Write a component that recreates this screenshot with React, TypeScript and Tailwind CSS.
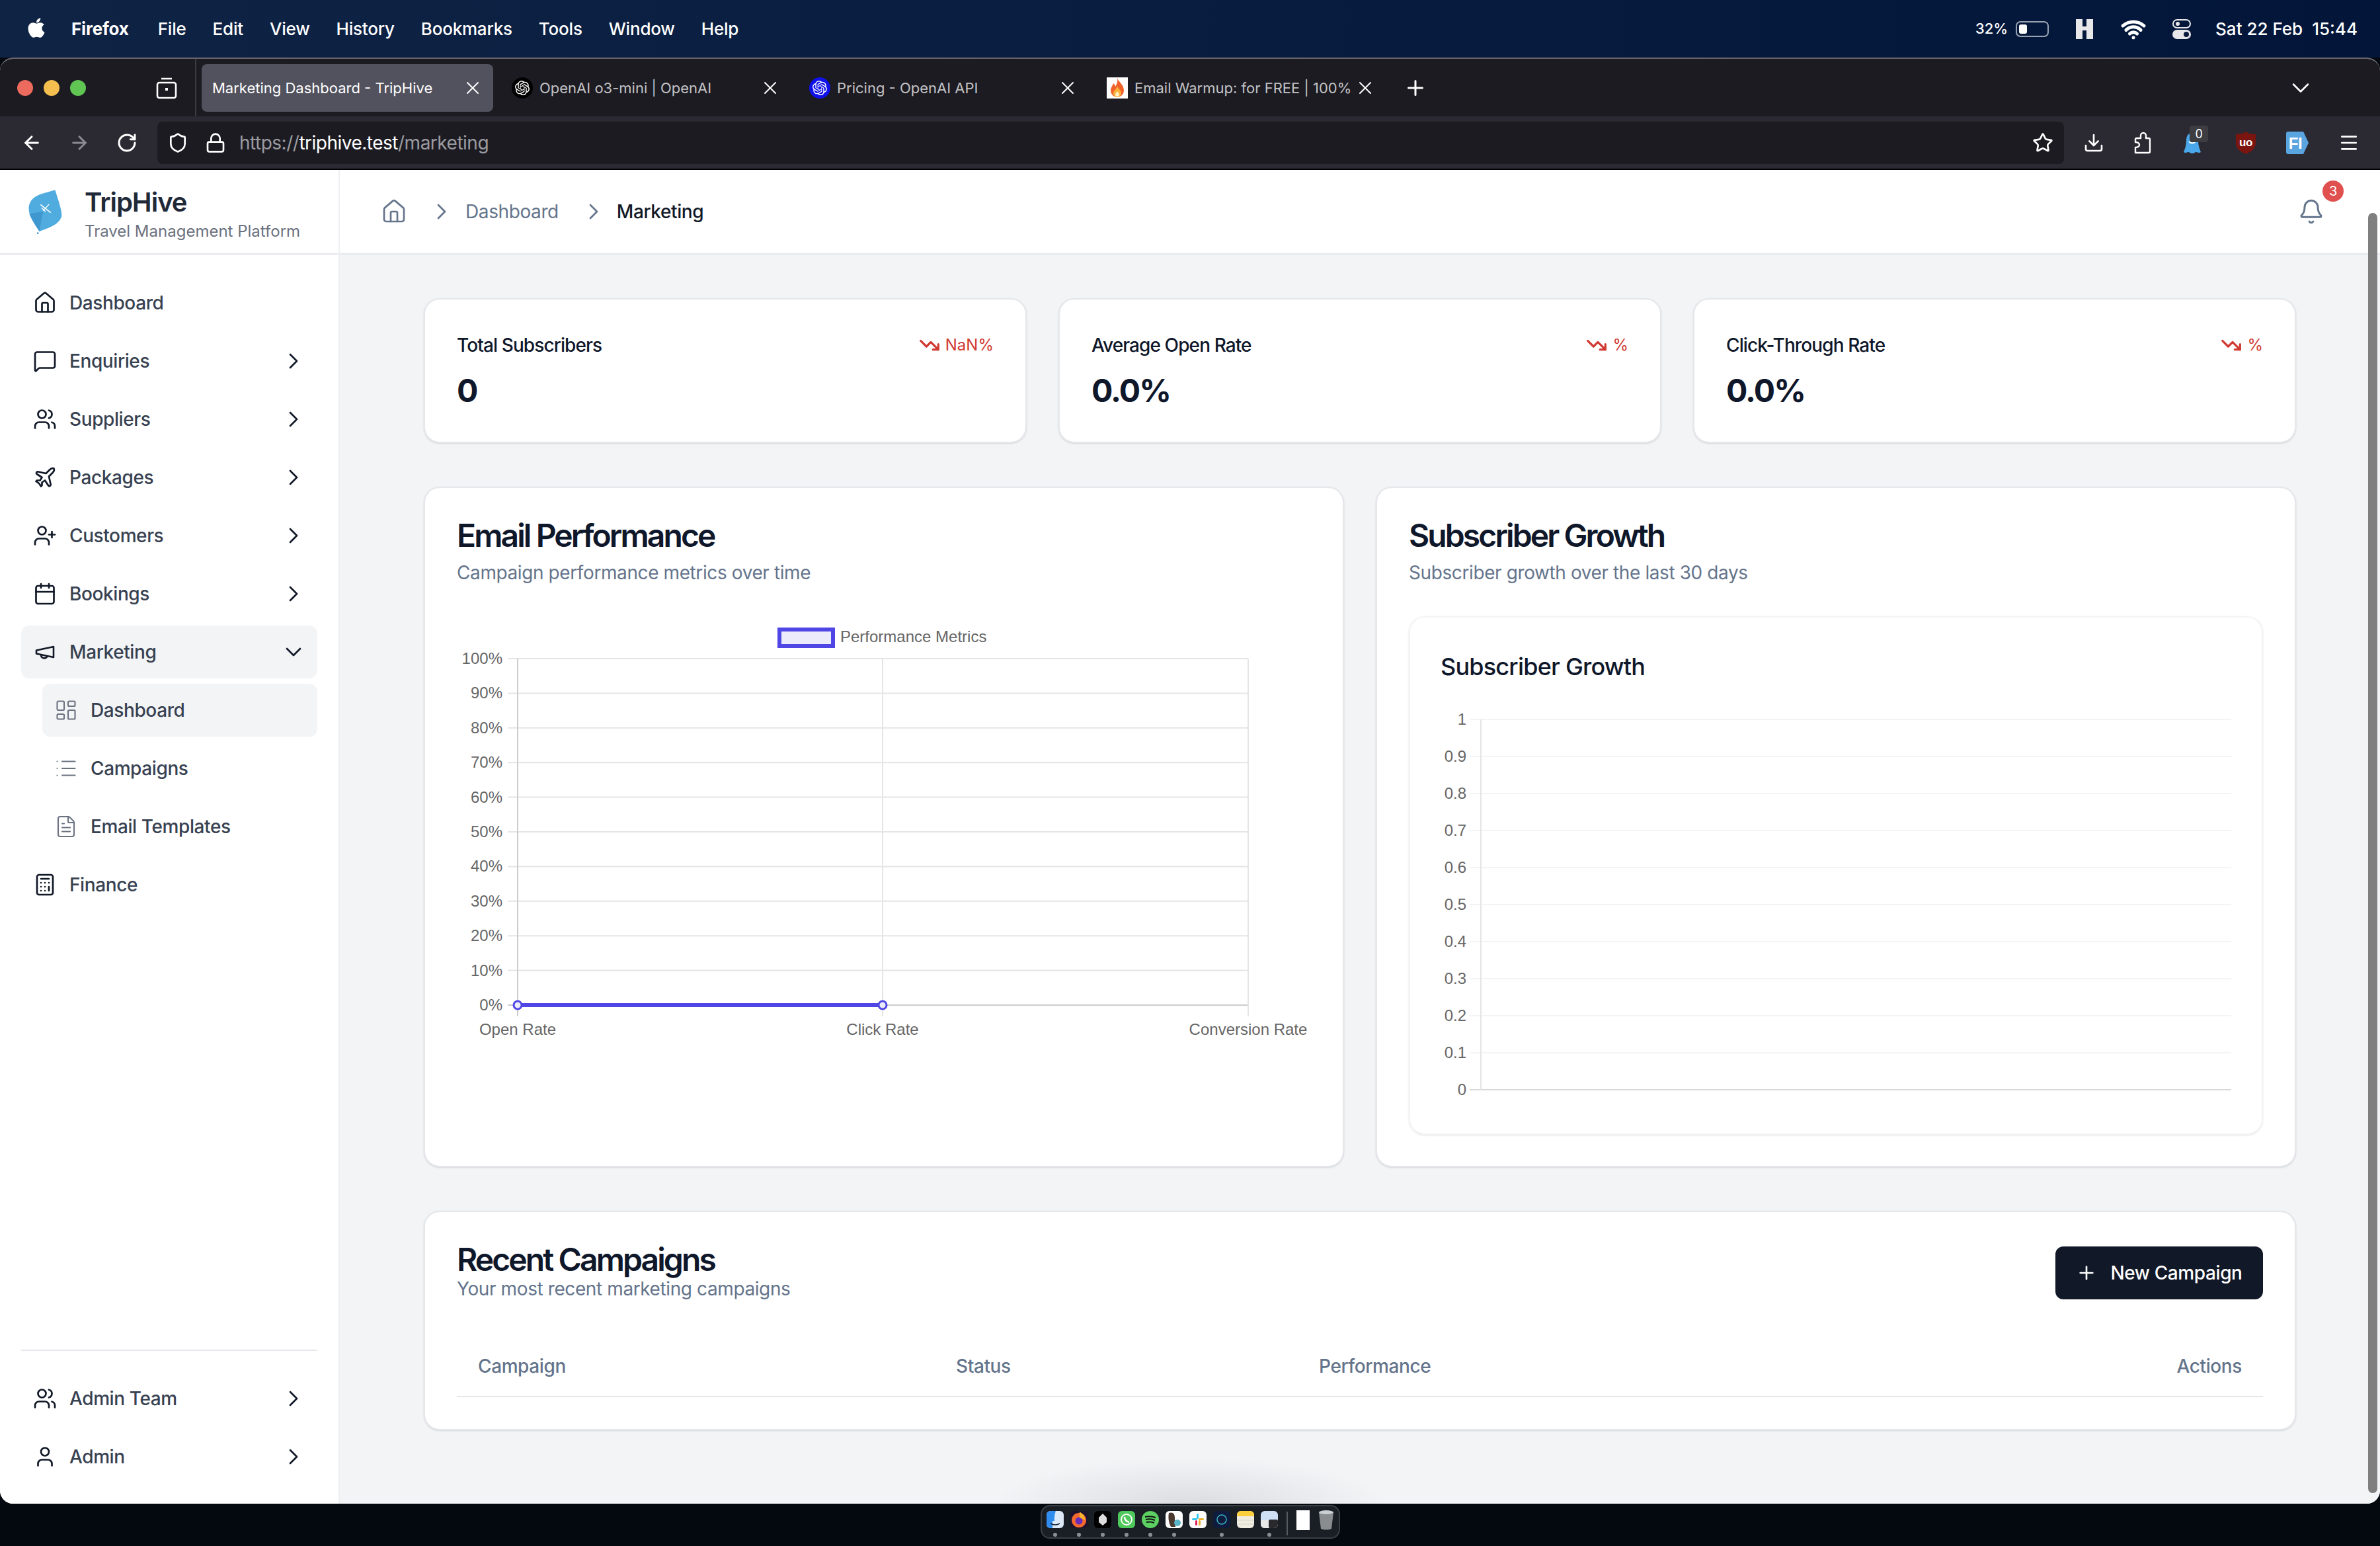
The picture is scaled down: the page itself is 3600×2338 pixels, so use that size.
import React from "react";
import {
  ArrowLeft,
  ArrowRight,
  Bell,
  Calculator,
  Calendar,
  ChevronDown,
  ChevronRight,
  Download,
  FileText,
  House,
  LayoutDashboard,
  List,
  Lock,
  Menu,
  MessageSquare,
  Plane,
  Plus,
  RotateCw,
  Shield,
  Star,
  TrendingDown,
  User,
  UserPlus,
  Users,
  Wifi,
  X,
} from "lucide-react";
import { FaApple } from "react-icons/fa";
import { SiOpenai } from "react-icons/si";

const menuItems = ["File", "Edit", "View", "History", "Bookmarks", "Tools", "Window", "Help"];

function MenuBar() {
  return (
    <div className="h-[87px] shrink-0 flex items-center bg-linear-to-r from-[#0f2345] to-[#03163a] text-white text-[26px] font-medium tracking-[-0.2px]">
      <FaApple className="ml-[38px] mb-[4px]" size={34} />
      <span className="ml-[36px] font-bold">Firefox</span>
      <div className="flex gap-[40px] ml-[44px]">
        {menuItems.map((m) => (
          <span key={m}>{m}</span>
        ))}
      </div>
      <div className="ml-auto flex items-center pr-[34px] tracking-normal">
        <span className="text-[22px]">32%</span>
        <div className="ml-[12px] w-[50px] h-[24px] rounded-[7px] border-2 border-[#9aa3b2] p-[3px] flex">
          <div className="w-[12px] rounded-[3px] bg-white" />
        </div>
        <svg className="ml-[41px]" width="26" height="30" viewBox="0 0 26 30">
          <path d="M0 0h10v11h6V0h10v30H16V17h-6v13H0z" fill="#e8e8ea" />
        </svg>
        <Wifi className="ml-[42px]" size={38} strokeWidth={3.2} />
        <svg className="ml-[39px]" width="30" height="30" viewBox="0 0 30 30">
          <rect x="2" y="1" width="26" height="12" rx="6" fill="none" stroke="#e8e8ea" strokeWidth="2" />
          <circle cx="9" cy="7" r="3" fill="#e8e8ea" />
          <rect x="1" y="16" width="28" height="14" rx="7" fill="#e8e8ea" />
          <circle cx="22" cy="23" r="4" fill="#0a1b3d" />
        </svg>
        <span className="ml-[36px]">Sat 22 Feb</span>
        <span className="ml-[14px]">15:44</span>
      </div>
    </div>
  );
}

function Tab({ title, active, icon }: { title: string; active?: boolean; icon?: React.ReactNode }) {
  return (
    <div
      className={`w-[441px] h-[72px] shrink-0 rounded-[8px] flex items-center text-[22px] tracking-normal ${
        active ? "bg-[#52525e] text-white pl-[16px]" : "text-[#c3c3c6] pl-[19px]"
      }`}
    >
      {icon}
      <span className={`overflow-hidden whitespace-nowrap flex-1 pt-[2px] ${icon ? "ml-[10px]" : ""}`}>{title}</span>
      <X className="text-white ml-[2px] mr-[15px] shrink-0" size={32} strokeWidth={1.5} />
    </div>
  );
}

function FireIcon() {
  return (
    <svg width="32" height="32" viewBox="0 0 32 32" className="shrink-0">
      <rect width="32" height="32" fill="#fff" />
      <path d="M16 1c2 6 10 10 10 19a10 10 0 0 1-20 0c0-5 3-7 4-11 2 1 3 3 3 5 2-3 4-7 3-13z" fill="#f0622a" />
      <path d="M16 13c1 4 6 6 6 11a6 6 0 0 1-12 0c0-4 5-6 6-11z" fill="#fbb03b" />
      <path d="M16 21c1 2 3 3 3 5a3 3 0 0 1-6 0c0-2 2-3 3-5z" fill="#fff3c4" />
    </svg>
  );
}

function TabBar() {
  return (
    <div className="h-[87px] shrink-0 flex items-center bg-[#1c1b22] text-white">
      <div className="w-[297px] h-full flex items-center border-r-2 border-[#3c3b42] pl-[26px]">
        <div className="w-[24px] h-[24px] rounded-full bg-[#ec6a5e]" />
        <div className="w-[24px] h-[24px] rounded-full bg-[#f4bf4f] ml-[16px]" />
        <div className="w-[24px] h-[24px] rounded-full bg-[#61c554] ml-[16px]" />
        <svg className="ml-[105px]" width="34" height="34" viewBox="0 0 34 34" fill="none" stroke="#fff" strokeWidth="2.6">
          <path d="M9 3h16" />
          <rect x="3" y="9" width="28" height="23" rx="3" />
          <rect x="15" y="17" width="4" height="4" fill="#fff" stroke="none" />
        </svg>
      </div>
      <div className="flex gap-[9px] ml-[8px] items-center">
        <Tab title="Marketing Dashboard - TripHive" active />
        <Tab
          title="OpenAI o3-mini | OpenAI"
          icon={
            <span className="w-[32px] h-[32px] rounded-full bg-black flex items-center justify-center shrink-0">
              <SiOpenai size={22} color="#fff" />
            </span>
          }
        />
        <Tab
          title="Pricing - OpenAI API"
          icon={
            <span className="w-[32px] h-[32px] rounded-full bg-[#1010e8] flex items-center justify-center shrink-0">
              <SiOpenai size={22} color="#fff" />
            </span>
          }
        />
        <Tab title="Email Warmup: for FREE | 100%" icon={<FireIcon />} />
      </div>
      <Plus className="ml-[27px]" size={36} strokeWidth={2} />
      <ChevronDown className="ml-auto mr-[98px]" size={44} strokeWidth={1.4} />
    </div>
  );
}

function Toolbar() {
  return (
    <div className="h-[81px] shrink-0 flex items-center bg-[#2b2a33] border-b-2 border-black text-white">
      <div className="flex items-center gap-[40px] pl-[32px]">
        <ArrowLeft size={32} strokeWidth={2.2} />
        <ArrowRight size={32} strokeWidth={2.2} className="text-[#8a8a90]" />
        <RotateCw size={32} strokeWidth={2.2} />
      </div>
      <div className="ml-[30px] w-[2884px] h-[64px] rounded-[8px] bg-[#1c1b22] flex items-center pl-[15px] pr-[16px]">
        <Shield size={32} strokeWidth={2} />
        <Lock className="ml-[25px]" size={32} strokeWidth={2} />
        <span className="ml-[20px] text-[28px] tracking-[-0.5px] text-[#9b9ba0]">
          https://<span className="text-white">triphive.test</span>/marketing
        </span>
        <Star className="ml-auto" size={32} strokeWidth={2} />
      </div>
      <div className="ml-[7px] flex items-center">
        <div className="w-[76px] flex justify-center">
          <Download size={32} strokeWidth={2} />
        </div>
        <div className="w-[72px] flex justify-center">
          <svg width="32" height="34" viewBox="0 0 32 34" fill="none" stroke="#fff" strokeWidth="2.4" strokeLinejoin="round">
            <path d="M5 32v-8c4 0 6-2 6-4s-2-4-6-4v-4a2 2 0 0 1 2-2h6V6a4 4 0 0 1 8 0v4h4a2 2 0 0 1 2 2v18a2 2 0 0 1-2 2z" />
          </svg>
        </div>
        <div className="w-[78px] flex justify-center relative">
          <svg width="26" height="32" viewBox="0 0 26 32">
            <path d="M13 1C6 1 4 7 4 13c0 7-2 12-4 17 3 2 5 0 7 0s3 2 6 2 4-2 6-2 4 2 7 0c-2-5-4-10-4-17 0-6-2-12-9-12z" fill="#4aa8ea" />
            <path d="M8 14q5 5 10 0" fill="none" stroke="#fff" strokeWidth="2" />
          </svg>
          <span className="absolute left-[35px] -top-[10px] w-[28px] h-[25px] rounded-[4px] bg-[#3e3e42] text-[18px] leading-[25px] text-center">
            0
          </span>
        </div>
        <div className="w-[84px] flex justify-center">
          <svg width="30" height="34" viewBox="0 0 30 34">
            <path d="M15 0l5 3 10 1v14c0 8-8 13-15 16C8 31 0 26 0 18V4l10-1z" fill="#7a1510" />
            <text x="15" y="22" textAnchor="middle" className="font-['Liberation_Sans',sans-serif] text-[17px] font-bold fill-white">
              uo
            </text>
          </svg>
        </div>
        <div className="w-[72px] flex justify-center">
          <svg width="34" height="34" viewBox="0 0 34 34">
            <path d="M3 0h23l8 17-8 17H3a3 3 0 0 1-3-3V3a3 3 0 0 1 3-3z" fill="#5aa5e0" />
            <text x="14" y="26" textAnchor="middle" className="font-['Liberation_Sans',sans-serif] text-[24px] font-bold fill-white">
              FI
            </text>
          </svg>
        </div>
        <div className="w-[84px] flex justify-center">
          <Menu size={32} strokeWidth={2} />
        </div>
      </div>
    </div>
  );
}

type NavProps = {
  icon: React.ReactNode;
  label: string;
  chevron?: "right" | "down";
  active?: boolean;
  sub?: boolean;
};

function NavItem({ icon, label, chevron, active, sub }: NavProps) {
  return (
    <div
      className={`h-[80px] rounded-[12px] flex items-center text-[28px] font-medium text-[#374151] pr-[20px] ${
        sub ? "ml-[32px] pl-[20px]" : "pl-[20px]"
      } ${active ? "bg-[#f3f4f6]" : ""}`}
    >
      {icon}
      <span className="ml-[21px]">{label}</span>
      {chevron === "right" && <ChevronRight className="ml-auto text-[#111827] -mr-[4px]" size={40} strokeWidth={1.6} />}
      {chevron === "down" && <ChevronDown className="ml-auto text-[#111827] -mr-[4px]" size={40} strokeWidth={1.6} />}
    </div>
  );
}

function MegaphoneIcon() {
  return (
    <svg className="text-[#111827] shrink-0" width="32" height="32" viewBox="0 0 32 32" fill="none" stroke="currentColor" strokeWidth="2.6" strokeLinejoin="round">
      <path d="M29 8v16L3 18.500v-5z" />
      <path d="M10 20.500a5 5 0 0 0 9.500 2" />
    </svg>
  );
}

function Sidebar() {
  const ic = "text-[#111827] shrink-0 -mx-[2px]";
  const si = "text-[#6b7280] shrink-0 -mx-[2px]";
  return (
    <aside className="w-[514px] shrink-0 flex flex-col bg-white border-r-2 border-[#eef0f3]">
      <div className="h-[128px] shrink-0 flex items-center border-b-2 border-[#e5e7eb]">
        <svg className="ml-[40px] shrink-0" width="57" height="70" viewBox="60 45 170 210">
          <path d="M190 52C150 65 100 70 78 105C55 145 85 190 118 240C160 225 205 210 218 175C225 150 200 90 190 52z" fill="#50acdf" />
          <path d="M135 150L118 240C100 210 85 190 72 160z" fill="#3f97cf" />
          <circle cx="111" cy="248" r="4" fill="#3f97cf" />
          <path d="M123 118L170 155" stroke="#fff" strokeWidth="5" />
          <path d="M162 117L135 146M128 133L146 150" stroke="#fff" strokeWidth="4" />
        </svg>
        <div className="ml-[31px] pt-[10px] flex flex-col">
          <span className="text-[40px] leading-[50px] font-semibold text-[#1f2937] tracking-tight">TripHive</span>
          <span className="text-[24px] leading-[38px] text-[#6b7280] tracking-normal">Travel Management Platform</span>
        </div>
      </div>
      <nav className="flex flex-col gap-[8px] px-[32px] pt-[33px]">
        <NavItem icon={<House className={ic} size={36} strokeWidth={1.8} />} label="Dashboard" />
        <NavItem icon={<MessageSquare className={ic} size={36} strokeWidth={1.8} />} label="Enquiries" chevron="right" />
        <NavItem icon={<Users className={ic} size={36} strokeWidth={1.8} />} label="Suppliers" chevron="right" />
        <NavItem icon={<Plane className={ic} size={36} strokeWidth={1.8} />} label="Packages" chevron="right" />
        <NavItem icon={<UserPlus className={ic} size={36} strokeWidth={1.8} />} label="Customers" chevron="right" />
        <NavItem icon={<Calendar className={ic} size={36} strokeWidth={1.8} />} label="Bookings" chevron="right" />
        <NavItem icon={<MegaphoneIcon />} label="Marketing" chevron="down" active />
        <NavItem icon={<LayoutDashboard className={si} size={36} strokeWidth={1.4} />} label="Dashboard" sub active />
        <NavItem icon={<List className={si} size={36} strokeWidth={1.4} />} label="Campaigns" sub />
        <NavItem icon={<FileText className={si} size={36} strokeWidth={1.4} />} label="Email Templates" sub />
        <NavItem icon={<Calculator className={ic} size={36} strokeWidth={1.8} />} label="Finance" />
      </nav>
      <div className="mt-auto mx-[32px] border-t-2 border-[#e5e7eb] pt-[32px] pb-[31px] flex flex-col gap-[8px]">
        <NavItem icon={<Users className={ic} size={36} strokeWidth={1.8} />} label="Admin Team" chevron="right" />
        <NavItem icon={<User className={ic} size={36} strokeWidth={1.8} />} label="Admin" chevron="right" />
      </div>
    </aside>
  );
}

function Header() {
  return (
    <header className="h-[128px] shrink-0 bg-white border-b-2 border-[#e5e7eb] flex items-center text-[28px] pl-[62px] pr-[84px]">
      <House className="text-[#64748b]" size={40} strokeWidth={1.6} />
      <ChevronRight className="ml-[32px] text-[#64748b]" size={40} strokeWidth={1.6} />
      <span className="ml-[16px] text-[#64748b]">Dashboard</span>
      <ChevronRight className="ml-[33px] text-[#64748b]" size={40} strokeWidth={1.6} />
      <span className="ml-[15px] text-[#111827] font-medium">Marketing</span>
      <div className="ml-auto relative">
        <Bell className="text-[#64748b]" size={40} strokeWidth={1.8} />
        <span className="absolute -top-[27px] left-[37px] w-[32px] h-[32px] rounded-full bg-[#e0504f] text-white text-[20px] leading-[32px] text-center">
          3
        </span>
      </div>
    </header>
  );
}

function StatCard({ label, value, trend }: { label: string; value: string; trend: string }) {
  return (
    <div className="h-[219px] rounded-[24px] bg-white border-2 border-[#e5e7eb] shadow-sm px-[48px] pt-[49px]">
      <div className="flex items-center justify-between h-[40px]">
        <span className="text-[28px] font-medium tracking-[-0.9px] text-[#0f172a]">{label}</span>
        <span className="flex items-center gap-[8px] text-[24px] tracking-normal text-[#d03a33]">
          <TrendingDown size={32} strokeWidth={2.4} />
          {trend}
        </span>
      </div>
      <div className="mt-[17px] text-[48px] leading-[64px] font-bold tracking-[-1.9px] text-[#0f172a]">{value}</div>
    </div>
  );
}

const pctTicks = ["100%", "90%", "80%", "70%", "60%", "50%", "40%", "30%", "20%", "10%", "0%"];
const growthTicks = ["1", "0.9", "0.8", "0.7", "0.6", "0.5", "0.4", "0.3", "0.2", "0.1", "0"];
const xLabels = [
  { x: 92, label: "Open Rate" },
  { x: 644, label: "Click Rate" },
  { x: 1197, label: "Conversion Rate" },
];

function PerformanceChart() {
  return (
    <svg className="mt-[44px] overflow-visible font-['Liberation_Sans',sans-serif] text-[24px] tracking-normal" width="1290" height="680" viewBox="0 0 1290 680">
      <rect x="488" y="22" width="81" height="25" fill="#ecebfb" stroke="#4f46e5" strokeWidth="6" />
      <text x="580" y="41" fill="#666">Performance Metrics</text>
      {pctTicks.map((t, i) => {
        const y = 66 + i * 52.4;
        return (
          <g key={t}>
            <line x1="77" x2="1197" y1={y} y2={y} stroke={i === 10 ? "#cccccc" : "#e5e5e5"} strokeWidth="2" />
            <text x="69" y={y + 8} textAnchor="end" fill="#666">
              {t}
            </text>
          </g>
        );
      })}
      {xLabels.map((l, i) => (
        <g key={l.label}>
          <line x1={l.x} x2={l.x} y1="66" y2="607" stroke={i === 0 ? "#cccccc" : "#e5e5e5"} strokeWidth="2" />
          <text x={l.x} y="635" textAnchor="middle" fill="#666">
            {l.label}
          </text>
        </g>
      ))}
      <line x1="92" x2="644" y1="590" y2="590" stroke="#4f46e5" strokeWidth="6" />
      <circle cx="92" cy="590" r="6" fill="#ecebfb" stroke="#4f46e5" strokeWidth="3" />
      <circle cx="644" cy="590" r="6" fill="#ecebfb" stroke="#4f46e5" strokeWidth="3" />
    </svg>
  );
}

function GrowthChart() {
  return (
    <svg className="mt-[14px] overflow-visible font-['Liberation_Sans',sans-serif] text-[24px] tracking-normal" width="1196" height="618" viewBox="0 0 1196 618">
      {growthTicks.map((t, i) => {
        const y = 38 + i * 56;
        return (
          <g key={t}>
            <line x1="44" x2="1196" y1={y} y2={y} stroke={i === 10 ? "#d9d9d9" : "#f3f4f6"} strokeWidth="2" />
            <text x="39" y={y + 8} textAnchor="end" fill="#666">
              {t}
            </text>
          </g>
        );
      })}
      <line x1="61" x2="61" y1="38" y2="598" stroke="#e5e5e5" strokeWidth="2" />
    </svg>
  );
}

function CardTitle({ title, sub }: { title: string; sub: string }) {
  return (
    <div>
      <h2 className="text-[48px] leading-[48px] font-semibold tracking-[-2.9px] text-[#0f172a]">{title}</h2>
      <p className="mt-[12px] text-[28px] leading-[40px] text-[#64748b]">{sub}</p>
    </div>
  );
}

function Main() {
  return (
    <main className="flex-1 min-w-0 flex flex-col bg-[#f3f4f6] relative">
      <Header />
      <div className="flex-1 flex flex-col gap-[66px] pl-[127px] pr-[127px] pt-[66px]">
        <div className="grid grid-cols-3 gap-[48px]">
          <StatCard label="Total Subscribers" value="0" trend="NaN%" />
          <StatCard label="Average Open Rate" value="0.0%" trend="%" />
          <StatCard label="Click-Through Rate" value="0.0%" trend="%" />
        </div>
        <div className="grid grid-cols-2 gap-[48px]">
          <div className="h-[1029px] rounded-[24px] bg-white border-2 border-[#e5e7eb] shadow-sm p-[48px]">
            <CardTitle title="Email Performance" sub="Campaign performance metrics over time" />
            <PerformanceChart />
          </div>
          <div className="h-[1029px] rounded-[24px] bg-white border-2 border-[#e5e7eb] shadow-sm p-[48px]">
            <CardTitle title="Subscriber Growth" sub="Subscriber growth over the last 30 days" />
            <div className="mt-[46px] h-[784px] rounded-[24px] border-2 border-[#f3f4f6] shadow-sm p-[46px]">
              <h3 className="text-[36px] leading-[56px] font-medium tracking-[-0.8px] text-[#0f172a]">Subscriber Growth</h3>
              <GrowthChart />
            </div>
          </div>
        </div>
        <div className="h-[332px] rounded-[24px] bg-white border-2 border-[#e5e7eb] shadow-sm p-[48px]">
          <div className="flex items-center justify-between h-[88px]">
            <div>
              <h2 className="text-[48px] leading-[48px] font-semibold tracking-[-2.9px] text-[#0f172a]">Recent Campaigns</h2>
              <p className="text-[28px] leading-[40px] text-[#64748b]">Your most recent marketing campaigns</p>
            </div>
            <button className="w-[314px] h-[80px] rounded-[12px] bg-[#111827] text-white text-[28px] font-medium flex items-center justify-center gap-[20px]">
              <Plus size={32} strokeWidth={2} />
              New Campaign
            </button>
          </div>
          <div className="mt-[52px] h-[92px] border-b-2 border-[#e5e7eb] grid grid-cols-[723px_549px_1fr_auto] items-center pl-[32px] pr-[32px] text-[28px] font-medium text-[#64748b]">
            <span>Campaign</span>
            <span>Status</span>
            <span>Performance</span>
            <span>Actions</span>
          </div>
        </div>
      </div>
      <div className="absolute right-[4px] top-[65px] w-[14px] h-[1936px] rounded-full bg-[#7f7f7f]" />
      <div className="absolute left-[986px] bottom-0 w-[600px] h-[70px] bg-[radial-gradient(ellipse_at_bottom,#dcdde0,#f3f4f600_70%)]" />
    </main>
  );
}

function DockIcon({ children, dot = true }: { children: React.ReactNode; dot?: boolean }) {
  return (
    <div className="w-[26px] flex flex-col items-center">
      <div className="w-[26px] h-[26px] rounded-[6px] overflow-hidden">{children}</div>
      <div className={`mt-[7px] w-[6px] h-[6px] rounded-full ${dot ? "bg-[#8b8f96]" : ""}`} />
    </div>
  );
}

function Dock() {
  return (
    <div className="flex-1 bg-[#04090f] flex justify-center items-start pt-[2px]">
      <div className="h-[51px] rounded-[14px] bg-[#1a1e25] border-2 border-[#3a3e45] flex items-start gap-[10px] pl-[7px] pr-[8px] pt-[7px]">
        <DockIcon>
          <svg viewBox="0 0 26 26">
            <rect width="26" height="26" fill="#dce9f7" />
            <path d="M0 0h14q-3 8-2 15H9v11H0z" fill="#2f8df0" />
            <path d="M6 19q7 4 14 0" fill="none" stroke="#123" strokeWidth="1.5" />
          </svg>
        </DockIcon>
        <DockIcon>
          <svg viewBox="0 0 26 26">
            <rect width="26" height="26" fill="#1d1330" />
            <circle cx="13" cy="14" r="11" fill="#f5692c" />
            <circle cx="13" cy="15" r="5.500" fill="#6a2bbd" />
            <path d="M14 1l6 5 3 8-9-4z" fill="#fcb42c" />
          </svg>
        </DockIcon>
        <DockIcon>
          <svg viewBox="0 0 26 26">
            <rect width="26" height="26" fill="#000" />
            <path d="M13 4l6 6v7l-6 5-6-5v-7z" fill="#ddd" />
          </svg>
        </DockIcon>
        <DockIcon>
          <svg viewBox="0 0 26 26">
            <rect width="26" height="26" fill="#4fc85c" />
            <circle cx="13" cy="13" r="8" fill="none" stroke="#fff" strokeWidth="2" />
            <path d="M10 9q0 6 7 8" fill="none" stroke="#fff" strokeWidth="2.4" />
          </svg>
        </DockIcon>
        <DockIcon>
          <svg viewBox="0 0 26 26">
            <rect width="26" height="26" fill="#1a1e25" />
            <circle cx="13" cy="13" r="13" fill="#5dd062" />
            <path d="M5 9q8-2 16 1M6 13q7-2 14 1M7 17q6-1.500 12 1" fill="none" stroke="#111" strokeWidth="2" />
          </svg>
        </DockIcon>
        <DockIcon>
          <svg viewBox="0 0 26 26">
            <rect width="26" height="26" fill="#fff" />
            <path d="M5 3q10-3 9 10l1 11H8q-5-10-3-21z" fill="#4a3a30" />
            <circle cx="18" cy="18" r="5" fill="#5ab4c8" />
          </svg>
        </DockIcon>
        <DockIcon dot={false}>
          <svg viewBox="0 0 26 26">
            <rect width="26" height="26" fill="#fff" />
            <rect x="11" y="4" width="3" height="8" rx="1.500" fill="#36c5f0" />
            <rect x="4" y="11" width="8" height="3" rx="1.500" fill="#36c5f0" />
            <rect x="14" y="11" width="8" height="3" rx="1.500" fill="#ecb22e" />
            <rect x="14" y="14" width="3" height="8" rx="1.500" fill="#ecb22e" />
            <rect x="9" y="14" width="3" height="8" rx="1.500" fill="#e01e5a" />
          </svg>
        </DockIcon>
        <DockIcon>
          <svg viewBox="0 0 26 26">
            <rect width="26" height="26" fill="#0f1c3d" />
            <circle cx="13" cy="13" r="7" fill="none" stroke="#3ab5c8" strokeWidth="1.500" />
          </svg>
        </DockIcon>
        <DockIcon dot={false}>
          <svg viewBox="0 0 26 26">
            <rect width="26" height="26" fill="#efece2" />
            <rect width="26" height="8" fill="#fbd03c" />
            <path d="M0 14h26M0 20h26" stroke="#d8d5ca" />
          </svg>
        </DockIcon>
        <DockIcon>
          <svg viewBox="0 0 26 26">
            <rect width="26" height="26" fill="#cfe0f5" />
            <rect y="14" width="26" height="12" fill="#e8e8e8" />
            <rect x="12" y="13" width="14" height="13" rx="2" fill="#2a2a2e" />
          </svg>
        </DockIcon>
        <div className="w-[2px] h-[36px] bg-[#565a60] ml-[3px] mr-[4px] mt-[1px]" />
        <div className="w-[20px] h-[30px] bg-white -ml-[1px] -mt-[1px]" />
        <svg className="ml-[4px] -mt-[1px]" width="22" height="30" viewBox="0 0 22 30">
          <path d="M0 3h22l-3 25q-8 3-16 0z" fill="#8a8d90" />
          <ellipse cx="11" cy="3" rx="11" ry="3" fill="#c9d0d4" />
        </svg>
      </div>
    </div>
  );
}

export default function App() {
  return (
    <div className="w-[3600px] h-[2338px] flex flex-col overflow-hidden bg-[#04090f] font-['Inter',sans-serif] tracking-[-0.4px]">
      <MenuBar />
      <div className="h-[2187px] shrink-0 flex flex-col rounded-[20px] overflow-hidden bg-white border-t-2 border-[#66666a]">
        <TabBar />
        <Toolbar />
        <div className="flex-1 min-h-0 flex">
          <Sidebar />
          <Main />
        </div>
      </div>
      <Dock />
    </div>
  );
}
